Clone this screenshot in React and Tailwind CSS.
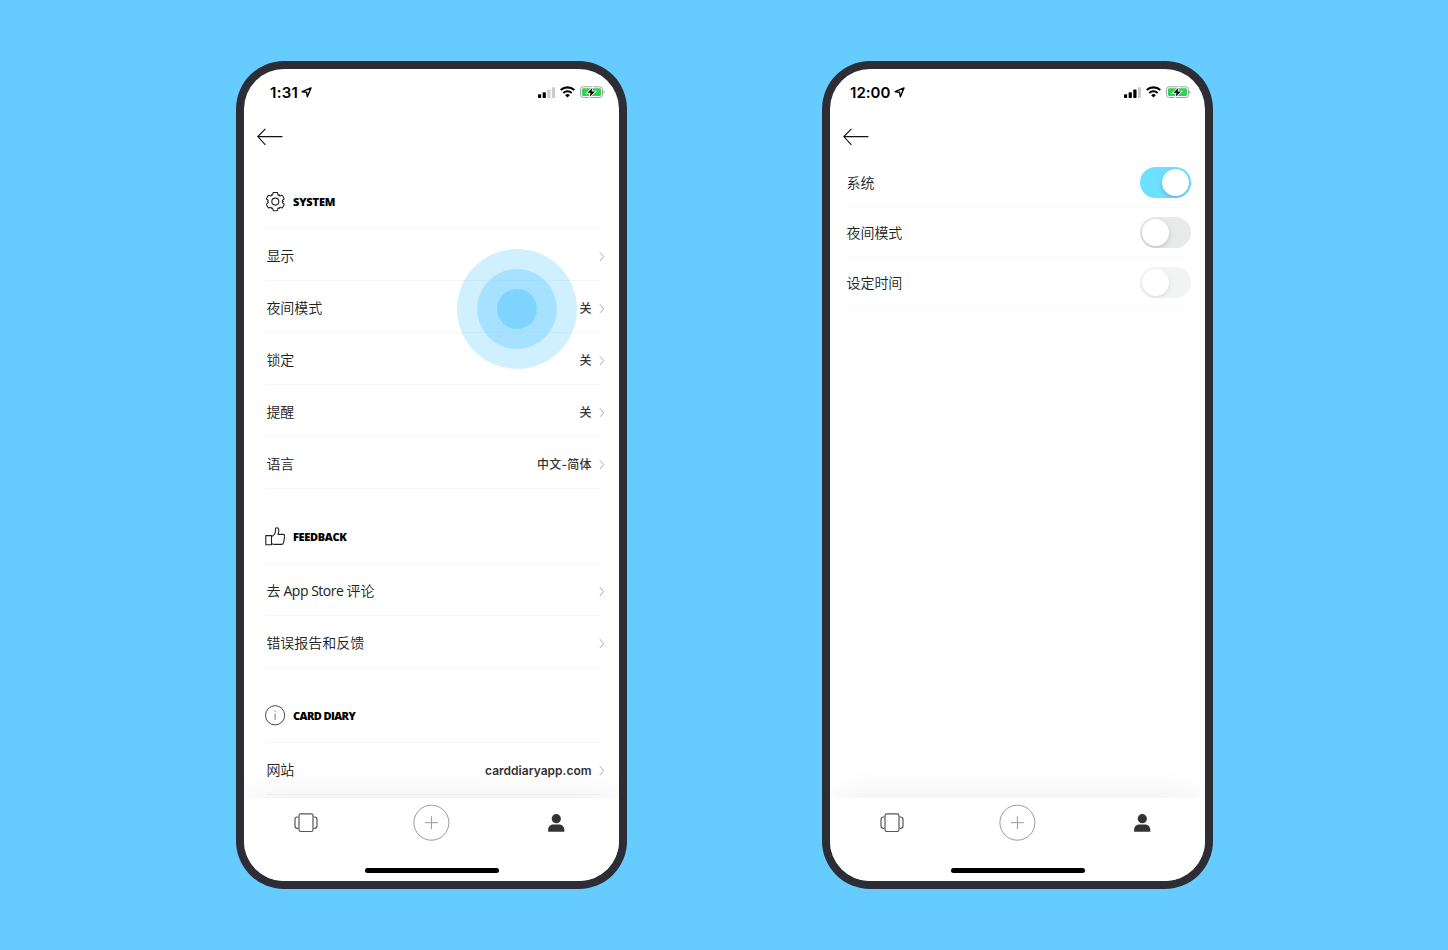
const CJK = "font-['Open_Sans','Noto_Sans_CJK_SC',sans-serif]";

function LocationIcon() {
  return (
    <svg className="ml-[3px] h-[11px] w-[11px]" viewBox="0 0 11 11" fill="none">
      <path d="M10 0.9 L1.2 4.7 L5.6 5.3 L6.3 9.7 Z" stroke="#000" strokeWidth="1.4" strokeLinejoin="round" />
    </svg>
  );
}

function SignalIcon({ bars }) {
  const heights = [3.8, 5.8, 8.4, 10.8];
  return (
    <svg className="h-[11px] w-[17px]" viewBox="0 0 17 11">
      {heights.map((h, i) => (
        <rect key={h} x={i * 4.65} y={11 - h} width="3.2" height={h} rx="0.7" fill={i < bars ? "#000" : "#ccc"} />
      ))}
    </svg>
  );
}

function WifiIcon() {
  return (
    <svg className="ml-[5px] h-[12px] w-[15px]" viewBox="0 0 15 12" fill="none" stroke="#000">
      <path d="M0.7 4.1 A9.8 9.8 0 0 1 14.3 4.1" strokeWidth="2.1" />
      <path d="M3.3 6.9 A6.1 6.1 0 0 1 11.7 6.9" strokeWidth="2" />
      <path d="M5.2 9.2 A3.3 3.3 0 0 1 9.8 9.2 L7.5 11.6 Z" fill="#000" stroke="none" />
    </svg>
  );
}

function BatteryIcon() {
  return (
    <svg className="ml-[5px] h-[12px] w-[25px]" viewBox="0 0 25 12">
      <rect x="0.5" y="0.8" width="22" height="10.7" rx="2.8" fill="none" stroke="#a0a0a0" />
      <rect x="2" y="2.3" width="19" height="7.7" rx="1.3" fill="#30d158" />
      <path d="M23.6 4.4 C24.9 4.8 24.9 7.5 23.6 7.9 Z" fill="#8a8a8a" />
      <path
        d="M12.5 1.7 L7.4 6.8 H10.6 L9.7 10.7 L14.9 5.5 H11.5 Z"
        fill="#000"
        stroke="#fff"
        strokeWidth="1.7"
        paintOrder="stroke"
      />
    </svg>
  );
}

function StatusBar({ time, bars, pad, tracking }) {
  return (
    <div className={`flex h-[46px] shrink-0 items-center pr-[14px] ${pad}`}>
      <span className={`pt-[2px] font-['Inter',sans-serif] text-[15px] leading-[20px] font-semibold text-black ${tracking}`}>
        {time}
      </span>
      <LocationIcon />
      <div className="ml-auto flex items-center">
        <SignalIcon bars={bars} />
        <WifiIcon />
        <BatteryIcon />
      </div>
    </div>
  );
}

function BackArrow() {
  return (
    <svg className="ml-[13px] mt-[13px] h-[18px] w-[26px] shrink-0" viewBox="0 0 26 18" fill="none" stroke="#111" strokeWidth="1.1">
      <path d="M8.4 0.9 L0.8 8.6 L8.4 16.8 M0.8 8.6 H25.4" />
    </svg>
  );
}

function GearIcon() {
  return (
    <svg className="h-[20px] w-[20px]" viewBox="-10.3 -9.6 20 20" fill="none" stroke="#222" strokeWidth="1.1">
      <circle r="3.5" />
      {[0, 60, 120, 180, 240, 300].map((a) => (
        <path
          key={a}
          transform={`rotate(${a})`}
          strokeLinecap="round"
          d="M-3.85 -6.7 C-3.1 -6.3 -2.5 -6.5 -2.4 -7.3 L-2.3 -8.6 Q-2.1 -9.2 -1.4 -9.2 L1.4 -9.2 Q2.1 -9.2 2.3 -8.6 L2.4 -7.3 C2.5 -6.5 3.1 -6.3 3.85 -6.7"
        />
      ))}
    </svg>
  );
}

function ThumbIcon() {
  return (
    <svg className="h-[20px] w-[20px]" viewBox="-0.2 0.6 20 20" fill="none" stroke="#222" strokeWidth="1.1" strokeLinejoin="round">
      <path d="M0.6 9.2 H6.3 V18.4 H0.6 Z" />
      <path d="M6.3 10.2 C8.8 9 10.2 6.6 10.3 4.6 V2.6 C10.5 0.7 13.4 0.9 13.6 3.6 C13.7 5.6 12.9 6.6 12.8 8 H17.8 C19.4 8 19.7 9.2 19.4 10.2 L18.4 16.2 C18.1 17.5 17.3 18 16.2 18 H8.8 C7.6 18 7.3 17.4 6.3 17.3" />
    </svg>
  );
}

function InfoIcon() {
  return (
    <svg className="h-[20px] w-[20px] overflow-visible" viewBox="0 0.7 20 20" fill="none" stroke="#333">
      <circle cx="10.1" cy="10" r="9.6" strokeWidth="0.9" />
      <path d="M10.1 8.2 V14.6 M10.1 5.2 V6.5" stroke="#777" strokeWidth="1" />
    </svg>
  );
}

function Chevron() {
  return (
    <svg className="ml-[8px] mr-[-4px] mt-[4px] h-[10px] w-[6px] overflow-visible" viewBox="0 0.4 6 10" fill="none" stroke="#aaa">
      <path d="M0.9 0.6 L4.6 5 L0.9 9.4" />
    </svg>
  );
}

function Header({ icon, children, tracking }) {
  return (
    <div className="flex h-[75px] items-end border-b border-[#f5f5f5] pb-[16px]">
      <span className="-ml-px">{icon}</span>
      <h2 className={`ml-[8px] font-['Open_Sans',sans-serif] text-[11px] leading-[20px] font-extrabold text-black ${tracking}`}>
        {children}
      </h2>
    </div>
  );
}

function Row({ label, value, valueStyle = "pt-[5px] font-medium tracking-[0.2px]" }) {
  return (
    <div className="flex h-[52px] items-center border-b border-[#f5f5f5]">
      <span className={`pt-[2px] pl-[0.4px] text-[14px] leading-[20px] font-[350] tracking-[-0.02px] text-[#222] ${CJK}`}>{label}</span>
      <span className={`ml-auto mr-[-0.6px] font-['Inter','Noto_Sans_CJK_SC',sans-serif] text-[12px] leading-[20px] text-[#333] ${valueStyle}`}>
        {value}
      </span>
      <Chevron />
    </div>
  );
}

function TabBar() {
  return (
    <nav className="relative mt-auto h-[83px] shrink-0 bg-white shadow-[0_0_40px_-8px_rgba(0,0,0,0.12)]">
      <div className="mr-px grid h-[50px] grid-cols-3 place-items-center">
        <svg className="h-[20px] w-[24px]" viewBox="0 0 24 20" fill="none" stroke="#555" strokeWidth="1.2">
          <rect x="5" y="0.9" width="14" height="17.6" rx="1.8" />
          <path d="M4.2 4 H3.6 C1.6 4 1 4.9 1 6.4 V13 C1 14.5 1.6 15.4 3.6 15.4 H4.2 M19.8 4 H20.4 C22.4 4 23 4.9 23 6.4 V13 C23 14.5 22.4 15.4 20.4 15.4 H19.8" />
        </svg>
        <svg className="h-[38px] w-[38px]" viewBox="0 0 38 38" fill="none" stroke="#999">
          <circle cx="19.4" cy="18.7" r="17.5" />
          <path d="M19.4 12.2 V25.2 M12.9 18.7 H25.9" />
        </svg>
        <svg className="h-[18px] w-[18px]" viewBox="-0.5 0 18 18" fill="#333">
          <circle cx="8.8" cy="4.7" r="4.6" />
          <path d="M0.6 17.8 V15.8 C0.8 12.3 3.4 10.5 6 10.5 H11.4 C14 10.5 16.6 12.3 16.8 15.8 V17.8 Z" />
        </svg>
      </div>
      <div className="mt-[19.6px] ml-[120.5px] h-[5px] w-[134px] rounded-full bg-black" />
    </nav>
  );
}

function Phone({ children }) {
  return (
    <section className="h-[828px] w-[391px] rounded-[48px] bg-[#2d2d36] p-[8px]">
      <div className="relative flex h-[812px] w-[375px] flex-col overflow-hidden rounded-[40px] bg-white">{children}</div>
    </section>
  );
}

function Toggle({ on = false, disabled = false }) {
  return (
    <span
      className={`mr-[-2px] flex h-[31px] w-[51px] items-center overflow-hidden rounded-full px-[2px] ${
        on ? "justify-end bg-[#6ee0ff]" : "bg-[#e8eaea]"
      } ${disabled ? "opacity-55" : ""}`}
    >
      <span className="h-[27px] w-[27px] rounded-full bg-white shadow-[0_2px_5px_rgba(0,0,0,0.16)]" />
    </span>
  );
}

function ToggleRow({ label, ...toggle }) {
  return (
    <div className="flex h-[50px] items-center justify-between border-b border-[#f9f9f9]">
      <span className={`ml-[-0.5px] text-[14px] leading-[20px] font-[350] tracking-[-0.05px] text-[#222] ${CJK}`}>{label}</span>
      <Toggle {...toggle} />
    </div>
  );
}

export default function App() {
  return (
    <main className="flex h-[950px] w-[1448px] gap-[195px] overflow-hidden bg-[#66ccff] pl-[236px] pt-[61px]">
      <Phone>
        <StatusBar time="1:31" bars={2} pad="pl-[26px]" tracking="tracking-[0.3px]" />
        <BackArrow />
        <div className="mt-[8px] ml-[22px] flex h-[644px] w-[335px] shrink-0 flex-col *:shrink-0">
          <Header icon={<GearIcon />} tracking="tracking-[-0.15px]">SYSTEM</Header>
          <Row label="显示" />
          <Row label="夜间模式" value="关" />
          <Row label="锁定" value="关" />
          <Row label="提醒" value="关" />
          <Row label="语言" value="中文-简体" />
          <Header icon={<ThumbIcon />} tracking="tracking-[-0.35px]">FEEDBACK</Header>
          <Row label={<>去<span className="font-normal tracking-[-0.5px]"> App Store </span>评论</>} />
          <Row label="错误报告和反馈" />
          <Header icon={<InfoIcon />} tracking="tracking-[-0.6px]">CARD DIARY</Header>
          <Row label="网站" value="carddiaryapp.com" valueStyle="pt-[4px] font-semibold tracking-[0.02px]" />
        </div>
        <TabBar />
        <div className="absolute top-[180px] left-[213px] grid h-[120px] w-[120px] place-items-center rounded-full bg-[#66ccff]/30">
          <div className="grid h-[80px] w-[80px] place-items-center rounded-full bg-[#66ccff]/40">
            <div className="h-[40px] w-[40px] rounded-full bg-[#66ccff]/60" />
          </div>
        </div>
      </Phone>
      <Phone>
        <StatusBar time="12:00" bars={3} pad="pl-[20px]" tracking="tracking-[0.05px]" />
        <BackArrow />
        <div className="mt-[12px] ml-[17px] w-[342px]">
          <ToggleRow label="系统" on />
          <ToggleRow label="夜间模式" />
          <ToggleRow label="设定时间" disabled />
        </div>
        <TabBar />
      </Phone>
    </main>
  );
}
